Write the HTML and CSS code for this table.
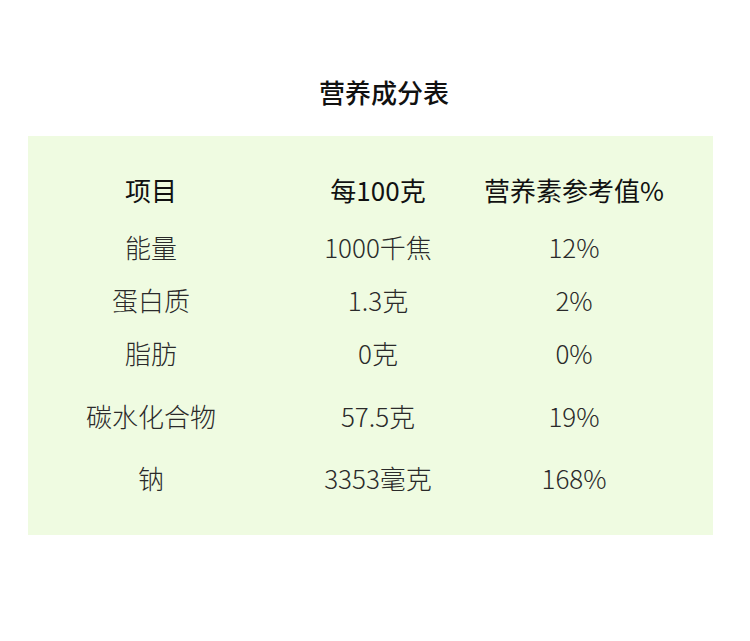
FILE: index.html
```html
<!DOCTYPE html>
<html lang="zh-CN">
<head>
<meta charset="utf-8">
<title>营养成分表</title>
<link rel="stylesheet" href="styles.css">
</head>
<body>
<div class="page">
  <h1 class="title">营养成分表</h1>
  <div class="panel">
    <div class="row head">
      <div class="cell">项目</div>
      <div class="cell">每100克</div>
      <div class="cell">营养素参考值%</div>
    </div>
    <div class="row r2">
      <div class="cell">能量</div>
      <div class="cell">1000千焦</div>
      <div class="cell">12%</div>
    </div>
    <div class="row r3">
      <div class="cell">蛋白质</div>
      <div class="cell">1.3克</div>
      <div class="cell">2%</div>
    </div>
    <div class="row r3">
      <div class="cell">脂肪</div>
      <div class="cell">0克</div>
      <div class="cell">0%</div>
    </div>
    <div class="row r5">
      <div class="cell">碳水化合物</div>
      <div class="cell">57.5克</div>
      <div class="cell">19%</div>
    </div>
    <div class="row r6">
      <div class="cell">钠</div>
      <div class="cell">3353毫克</div>
      <div class="cell">168%</div>
    </div>
  </div>
</div>
</body>
</html>
```
FILE: styles.css
```css
html, body {
  margin: 0;
  padding: 0;
  background: #ffffff;
}
.page {
  width: 750px;
  height: 641px;
  font-family: "Noto Sans CJK SC", "Noto Sans", sans-serif;
  color: #1f1f1f;
}
.title {
  margin: 0;
  padding-top: 72px;
  height: 40px;
  line-height: 40px;
  font-size: 26px;
  font-weight: 500;
  text-align: center;
  padding-left: 18px;
  color: #111;
}
.panel {
  margin: 24px 0 0 28px;
  width: 685px;
  height: 399px;
  box-sizing: border-box;
  padding-top: 34px;
  background: #effbe1;
}
.row {
  display: grid;
  grid-template-columns: 246px 208px 184px;
  height: 40px;
  line-height: 40px;
  font-size: 26px;
  font-weight: 300;
  color: #2a2a2a;
}
.row.head {
  font-weight: 400;
  color: #111;
}
.row.r2 { margin-top: 17px; }
.row.r3 { margin-top: 13px; }
.row.r5 { margin-top: 23px; }
.row.r6 { margin-top: 22px; }
.cell {
  text-align: center;
  white-space: nowrap;
}
```
